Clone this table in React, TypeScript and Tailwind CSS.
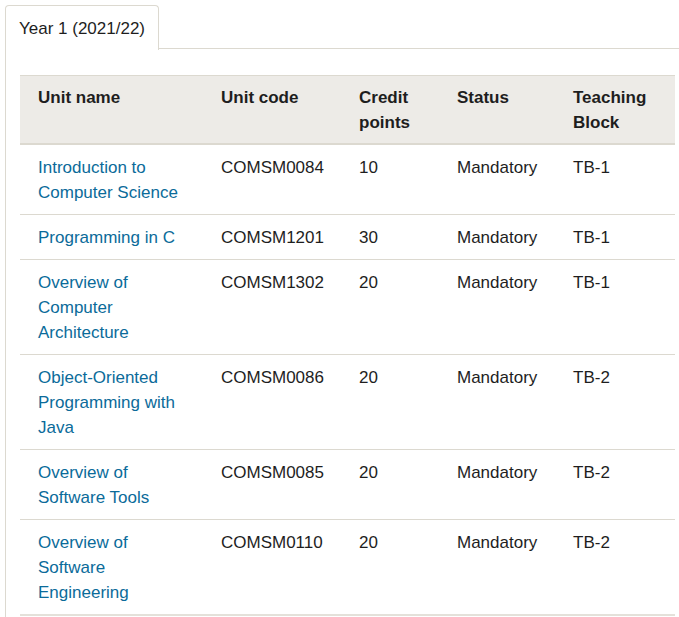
import React from "react";

const rows: { name: string; code: string; credits: string; status: string; tb: string }[] = [
  { name: "Introduction to Computer Science", code: "COMSM0084", credits: "10", status: "Mandatory", tb: "TB-1" },
  { name: "Programming in C", code: "COMSM1201", credits: "30", status: "Mandatory", tb: "TB-1" },
  { name: "Overview of Computer Architecture", code: "COMSM1302", credits: "20", status: "Mandatory", tb: "TB-1" },
  { name: "Object-Oriented Programming with Java", code: "COMSM0086", credits: "20", status: "Mandatory", tb: "TB-2" },
  { name: "Overview of Software Tools", code: "COMSM0085", credits: "20", status: "Mandatory", tb: "TB-2" },
  { name: "Overview of Software Engineering", code: "COMSM0110", credits: "20", status: "Mandatory", tb: "TB-2" },
];

export default function App() {
  return (
    <div
      className="w-[679px] h-[617px] overflow-hidden bg-white text-[#1e1e1e] text-[17px] leading-[25px]"
      style={{ fontFamily: '"Liberation Sans", Arial, sans-serif' }}
    >
      <div className="pt-[5px] pl-[5px] flex">
        <div className="w-[154px] h-[45px] border border-b-0 border-[#dcd9d0] rounded-t-[4px] pl-[13px] pt-[10px] bg-white relative z-10 -mb-px">
          Year 1 (2021/22)
        </div>
        <div className="flex-1 border-b border-[#dcd9d0]" />
      </div>
      <div className="ml-[5px] border-l border-[#dcd9d0] pl-[14px] pt-[26px] h-[600px]">
        <table className="w-[655px] border-collapse table-fixed">
          <colgroup>
            <col className="w-[183px]" />
            <col className="w-[138px]" />
            <col className="w-[98px]" />
            <col className="w-[116px]" />
            <col className="w-[120px]" />
          </colgroup>
          <thead>
            <tr className="bg-[#edebe7] border-t border-b-2 border-[#dcd9d0]">
              <th className="text-left align-top font-bold pl-[18px] pr-2 pt-[9px] pb-[8px]">Unit name</th>
              <th className="text-left align-top font-bold pl-[18px] pr-2 pt-[9px] pb-[8px]">Unit code</th>
              <th className="text-left align-top font-bold pl-[18px] pr-2 pt-[9px] pb-[8px]">Credit points</th>
              <th className="text-left align-top font-bold pl-[18px] pr-2 pt-[9px] pb-[8px]">Status</th>
              <th className="text-left align-top font-bold pl-[18px] pr-2 pt-[9px] pb-[8px]">Teaching Block</th>
            </tr>
          </thead>
          <tbody>
            {rows.map((r, i) => (
              <tr key={i} className={i === rows.length - 1 ? "border-b-2 border-[#e4e1da]" : "border-b border-[#dcd9d0]"}>
                <td className="align-top pl-[18px] pr-2 pt-[10px] pb-[9px]">
                  <a href="#" className="text-[#0b6b9a]">{r.name}</a>
                </td>
                <td className="align-top pl-[18px] pr-2 pt-[10px] pb-[9px]">{r.code}</td>
                <td className="align-top pl-[18px] pr-2 pt-[10px] pb-[9px]">{r.credits}</td>
                <td className="align-top pl-[18px] pr-2 pt-[10px] pb-[9px]">{r.status}</td>
                <td className="align-top pl-[18px] pr-2 pt-[10px] pb-[9px]">{r.tb}</td>
              </tr>
            ))}
          </tbody>
        </table>
      </div>
    </div>
  );
}
